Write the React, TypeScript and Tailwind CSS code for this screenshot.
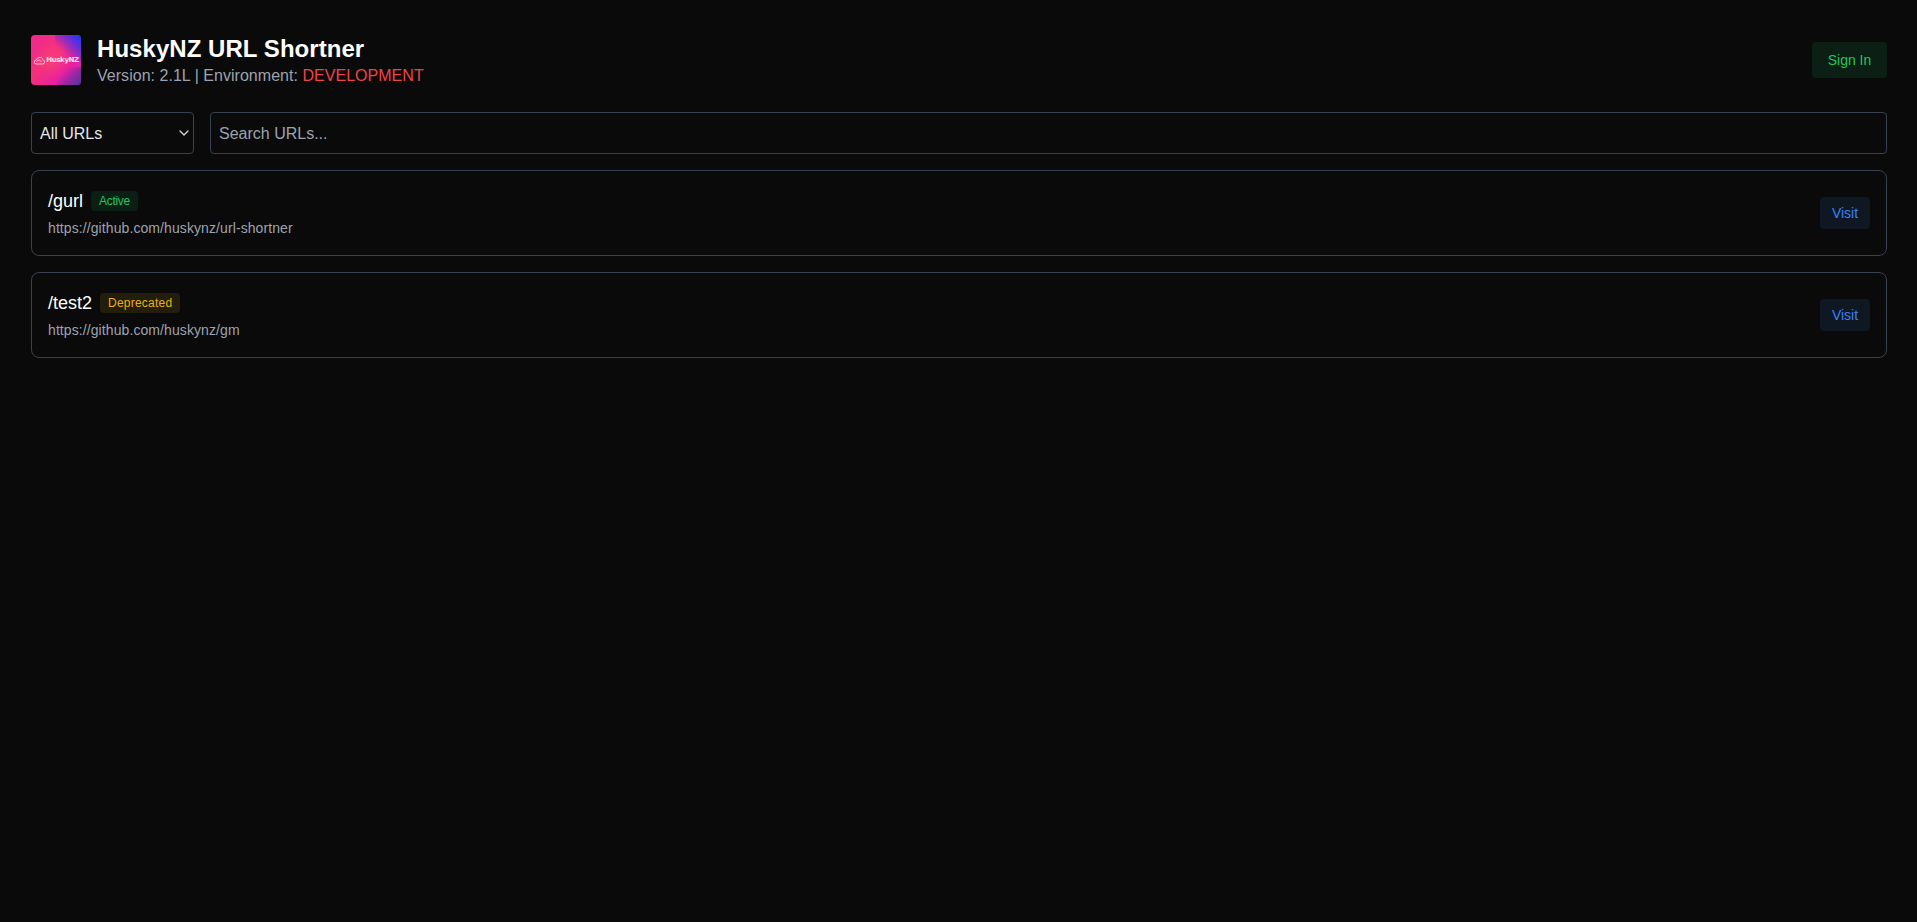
import { ChevronDown } from "lucide-react";

const urls = [
  {
    slug: "/gurl",
    target: "https://github.com/huskynz/url-shortner",
    status: "Active",
    badge: "bg-[#0c1f14] text-[#22c55e] tracking-[-0.3px]",
  },
  {
    slug: "/test2",
    target: "https://github.com/huskynz/gm",
    status: "Deprecated",
    badge: "bg-[#231d0b] text-[#eab308] tracking-[0.23px]",
  },
];

function Logo() {
  return (
    <div className="relative flex h-[50px] w-[50px] shrink-0 items-center justify-center gap-[1px] overflow-hidden rounded-[4px] bg-[linear-gradient(135deg,#ee2a90_0%,#f4307c_45%,#e81fa6_75%,#a82aa8_100%)]">
      <div className="absolute right-0 top-0 h-[26px] w-[26px] bg-[linear-gradient(225deg,#0a3cff_0%,#6a2cd8_28%,rgba(240,40,150,0)_68%)]" />
      <div className="absolute bottom-0 right-0 h-[18px] w-[24px] bg-[linear-gradient(315deg,#5a2f9e_0%,rgba(224,32,168,0)_75%)]" />
      <div className="absolute left-[10px] top-[14px] h-[22px] w-[22px] rounded-full bg-[#ff5a6a] opacity-40 blur-[6px]" />
      <svg viewBox="0 0 12 9" className="relative h-[9px] w-[12px]" fill="none" stroke="#ffc4d4" strokeWidth="1">
        <path d="M3 8h6.5a2 2 0 0 0 .3-4A3 3 0 0 0 6 1.7 2.6 2.6 0 0 0 3.5 4 2 2 0 0 0 3 8z" />
        <path d="M3.5 5.5 6 4l2.5 1.5" />
      </svg>
      <span className="relative whitespace-nowrap font-['DejaVu_Sans'] text-[7px] font-bold leading-none tracking-[-0.4px] text-[#ffe6ee]">
        HuskyNZ
      </span>
    </div>
  );
}

export default function App() {
  return (
    <div className="min-h-[922px] bg-[#0a0a0a] pb-8 pl-[31px] pr-[30px] pt-[35px] font-['Liberation_Sans',Arial,sans-serif]">
      {/* Header */}
      <header className="mb-[27px] flex items-center justify-between">
        <div className="flex items-center gap-4">
          <Logo />
          <div className="-mb-[2px]">
            <h1 className="text-2xl font-bold leading-[27px] tracking-[0.05px] text-white">HuskyNZ URL Shortner</h1>
            <p className="mt-[3px] text-base leading-[22px] tracking-[0.03px] text-[#9ca3af]">
              Version: 2.1L | Environment: <span className="text-[#ef4444]">DEVELOPMENT</span>
            </p>
          </div>
        </div>
        <button className="h-9 w-[75px] rounded-[4px] bg-[#0c1f14] text-sm text-[#22c55e]">Sign In</button>
      </header>

      {/* Filters */}
      <div className="mb-4 flex gap-4">
        <div className="relative h-[42px] w-[163px] shrink-0">
          <div className="flex h-full items-center rounded-[4px] border border-[#374151] pl-2 pt-[1px] text-base text-[#e5e7eb]">
            All URLs
          </div>
          <ChevronDown className="absolute right-[2px] top-[13px] h-4 w-4 text-[#d1d5db]" strokeWidth={2} />
        </div>
        <input
          placeholder="Search URLs..."
          className="h-[42px] flex-1 rounded-[4px] border border-[#374151] bg-transparent px-2 pt-[1px] text-base text-white outline-none placeholder:text-[#9ca3af]"
        />
      </div>

      {/* URL list */}
      <div className="flex flex-col gap-4">
        {urls.map((u) => (
          <div
            key={u.slug}
            className="flex h-[86px] items-center justify-between rounded-lg border border-[#374151] pl-4 pr-4"
          >
            <div className="pb-[2px]">
              <div className="flex items-center gap-2">
                <span className="text-lg leading-7 text-white">{u.slug}</span>
                <span className={`flex h-5 items-center rounded-[4px] px-2 text-xs ${u.badge}`}>{u.status}</span>
              </div>
              <p className="mt-[3px] text-sm leading-5 tracking-[0.09px] text-[#9ca3af]">{u.target}</p>
            </div>
            <button className="h-8 w-[50px] rounded-[4px] bg-[#0f1722] text-sm text-[#3b82f6]">Visit</button>
          </div>
        ))}
      </div>
    </div>
  );
}
